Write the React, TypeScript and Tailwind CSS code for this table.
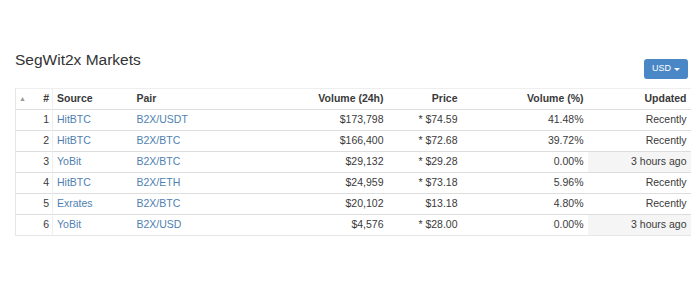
import React from "react";

const rows = [
  { n: 1, src: "HitBTC", pair: "B2X/USDT", vol: "$173,798", price: "* $74.59", pct: "41.48%", upd: "Recently", old: false },
  { n: 2, src: "HitBTC", pair: "B2X/BTC", vol: "$166,400", price: "* $72.68", pct: "39.72%", upd: "Recently", old: false },
  { n: 3, src: "YoBit", pair: "B2X/BTC", vol: "$29,132", price: "* $29.28", pct: "0.00%", upd: "3 hours ago", old: true },
  { n: 4, src: "HitBTC", pair: "B2X/ETH", vol: "$24,959", price: "* $73.18", pct: "5.96%", upd: "Recently", old: false },
  { n: 5, src: "Exrates", pair: "B2X/BTC", vol: "$20,102", price: "$13.18", pct: "4.80%", upd: "Recently", old: false },
  { n: 6, src: "YoBit", pair: "B2X/USD", vol: "$4,576", price: "* $28.00", pct: "0.00%", upd: "3 hours ago", old: true },
];

export default function App() {
  return (
    <div
      className="w-[700px] h-[300px] bg-white text-[#3a3a3a] pl-[15px] pr-[10px] pt-[49px]"
      style={{ fontFamily: '"Liberation Sans", Arial, sans-serif' }}
    >
      <div className="flex items-end justify-between h-[31px]">
        <div className="text-[15.5px] leading-none pb-[13px] text-[#333]">SegWit2x Markets</div>
        <button className="mr-[2px] mb-[1px] h-[20px] px-[8px] rounded-[3px] bg-[#4a87c6] text-white text-[9px] flex items-center gap-[3px]">
          USD
          <span className="inline-block w-0 h-0 border-l-[3px] border-r-[3px] border-t-[3px] border-l-transparent border-r-transparent border-t-white" />
        </button>
      </div>
      <div className="mt-[8px]">
        <table className="w-[675px] border-collapse text-[10.5px] table-fixed">
          <colgroup>
            <col className="w-[18px]" />
            <col className="w-[19px]" />
            <col className="w-[80px]" />
            <col className="w-[128px]" />
            <col className="w-[127px]" />
            <col className="w-[74px]" />
            <col className="w-[126px]" />
            <col className="w-[103px]" />
          </colgroup>
          <thead>
            <tr className="h-[21px] font-bold border-t border-[#eee]">
              <th className="border-l border-[#e6e6e6] text-left pl-[3px] text-[7px] font-normal text-[#999] align-middle">▲</th>
              <th className="text-right pr-[3px]">#</th>
              <th className="text-left pl-[4px] border-l border-[#eee]">Source</th>
              <th className="text-left pl-[4px]">Pair</th>
              <th className="text-right pr-[4px]">Volume (24h)</th>
              <th className="text-right pr-[4px]">Price</th>
              <th className="text-right pr-[4px]">Volume (%)</th>
              <th className="text-right pr-[4px]">Updated</th>
            </tr>
          </thead>
          <tbody>
            {rows.map((r) => (
              <tr key={r.n} className="h-[21px] border-t border-[#ddd]">
                <td className="border-l border-[#e6e6e6]"></td>
                <td className="text-right pr-[3px]">{r.n}</td>
                <td className="text-left pl-[4px] text-[#4f7fb0] border-l border-[#eee]">{r.src}</td>
                <td className="text-left pl-[4px] text-[#4f7fb0]">{r.pair}</td>
                <td className="text-right pr-[4px]">{r.vol}</td>
                <td className="text-right pr-[4px]">{r.price}</td>
                <td className="text-right pr-[4px]">{r.pct}</td>
                <td className={"text-right pr-[4px] " + (r.old ? "bg-[#f5f5f5]" : "")}>{r.upd}</td>
              </tr>
            ))}
            <tr className="h-0 border-t border-[#e6e6e6]"><td colSpan={8}></td></tr>
          </tbody>
        </table>
      </div>
    </div>
  );
}
